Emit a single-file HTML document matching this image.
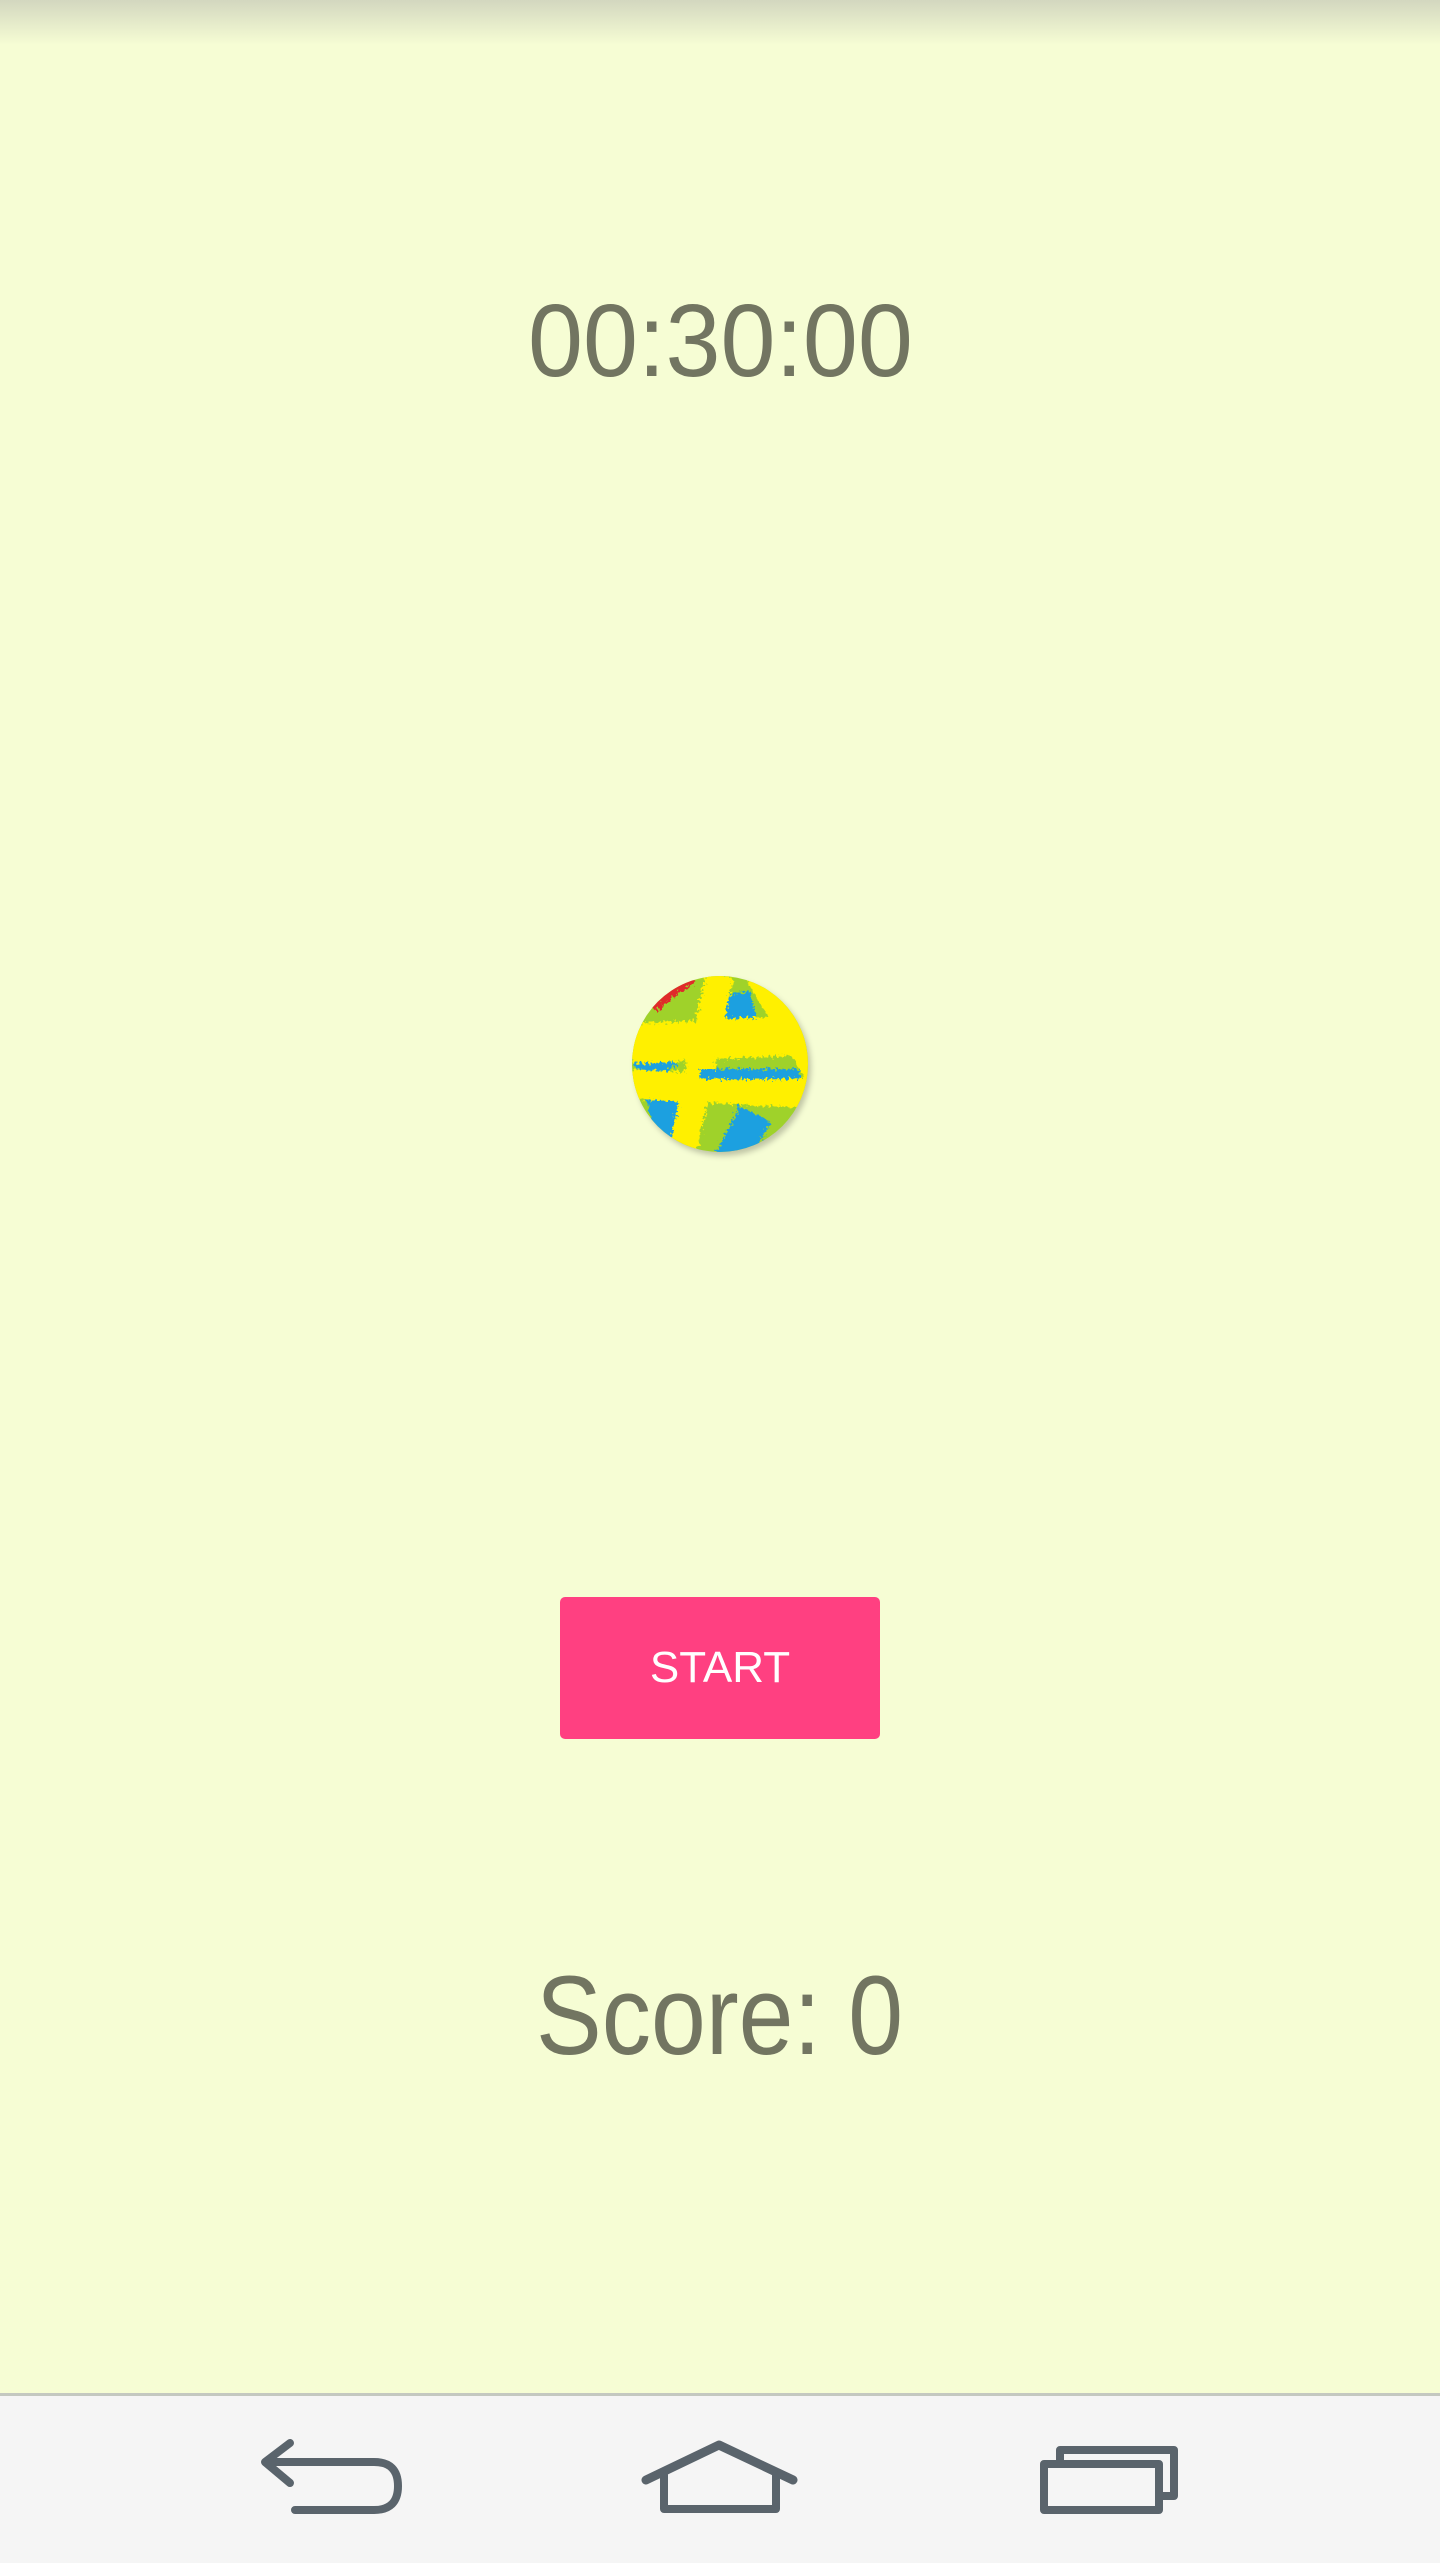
<!DOCTYPE html>
<html><head><meta charset="utf-8"><style>
html,body{margin:0;padding:0;}
body{width:1440px;height:2560px;background:#f6fdd4;position:relative;overflow:hidden;font-family:"Liberation Sans",sans-serif;}
.topsh{position:absolute;left:0;top:0;width:1440px;height:45px;background:linear-gradient(#d3d7bf,rgba(246,253,212,0));}
.t{position:absolute;left:0;width:1440px;text-align:center;color:#727561;white-space:nowrap;line-height:1;}
.t span{display:inline-block;}
.btn{position:absolute;left:560px;top:1597px;width:320px;height:142px;background:#ff4081;border-radius:5px;color:#fff;font-size:44px;text-align:center;line-height:142px;}
.nav{position:absolute;left:0;top:2393px;width:1440px;height:167px;background:#f5f5f5;border-top:3px solid #c4c8c0;}
</style></head><body>
<div class="topsh"></div>
<div class="t" style="top:289px;font-size:103px;"><span style="transform:scaleX(0.96)">00:30:00</span></div>
<svg style="position:absolute;left:620px;top:964px" width="210" height="210" viewBox="0 0 210 210">
<defs><clipPath id="c"><circle cx="100" cy="100" r="88"/></clipPath>
<filter id="b"><feGaussianBlur stdDeviation="3"/></filter>
<filter id="r"><feTurbulence type="fractalNoise" baseFrequency="0.35" numOctaves="2" result="n"/><feDisplacementMap in="SourceGraphic" in2="n" scale="10"/></filter></defs>
<circle cx="103" cy="104" r="88" fill="rgba(0,0,0,.22)" filter="url(#b)"/>
<g clip-path="url(#c)">
<rect x="0" y="0" width="210" height="210" fill="#9fd22a"/>
<g filter="url(#r)">
<path d="M30 40 L70 10" stroke="#e02a2a" stroke-width="18"/>
<path d="M115 30 L125 70" stroke="#1aa0e0" stroke-width="30"/>
<path d="M40 130 L60 200" stroke="#1aa0e0" stroke-width="30"/>
<path d="M135 150 L110 200" stroke="#1aa0e0" stroke-width="35"/>
<path d="M170 40 L190 70" stroke="#1aa0e0" stroke-width="25"/>
<path d="M20 110 L50 90" stroke="#1aa0e0" stroke-width="25"/>
<path d="M10 80 L200 70" stroke="#fff000" stroke-width="40"/>
<path d="M10 120 L200 130" stroke="#fff000" stroke-width="30"/>
<path d="M100 10 L60 200" stroke="#fff000" stroke-width="28"/>
<path d="M140 10 L200 110" stroke="#fff000" stroke-width="30"/>
<path d="M80 110 L180 110" stroke="#1aa0e0" stroke-width="10"/>
<path d="M170 170 L200 150" stroke="#e02a2a" stroke-width="10"/>
</g></g>
</svg>
<div class="btn">START</div>
<div class="t" style="top:1960px;font-size:112px;"><span style="transform:scaleX(0.88)">Score: 0</span></div>
<div class="nav">
<svg style="position:absolute;left:0;top:-3px" width="1440" height="170" viewBox="0 2390 1440 170" fill="none" stroke="#5a646c" stroke-width="8" stroke-linecap="round" stroke-linejoin="round">
<path d="M290 2440 L265 2459 L290 2480"/>
<path d="M266 2459 L374 2459 Q398 2459 398 2483 Q398 2507 374 2507 L295 2507"/>
<path d="M646 2477 L719 2442 L793 2477" stroke-width="9"/>
<path d="M664 2472 V2506 H776 V2472"/>
<path d="M1060 2457 V2447 H1174 V2493 H1162"/>
<rect x="1044" y="2461" width="115" height="46"/>
</svg>
</div>
</body></html>
